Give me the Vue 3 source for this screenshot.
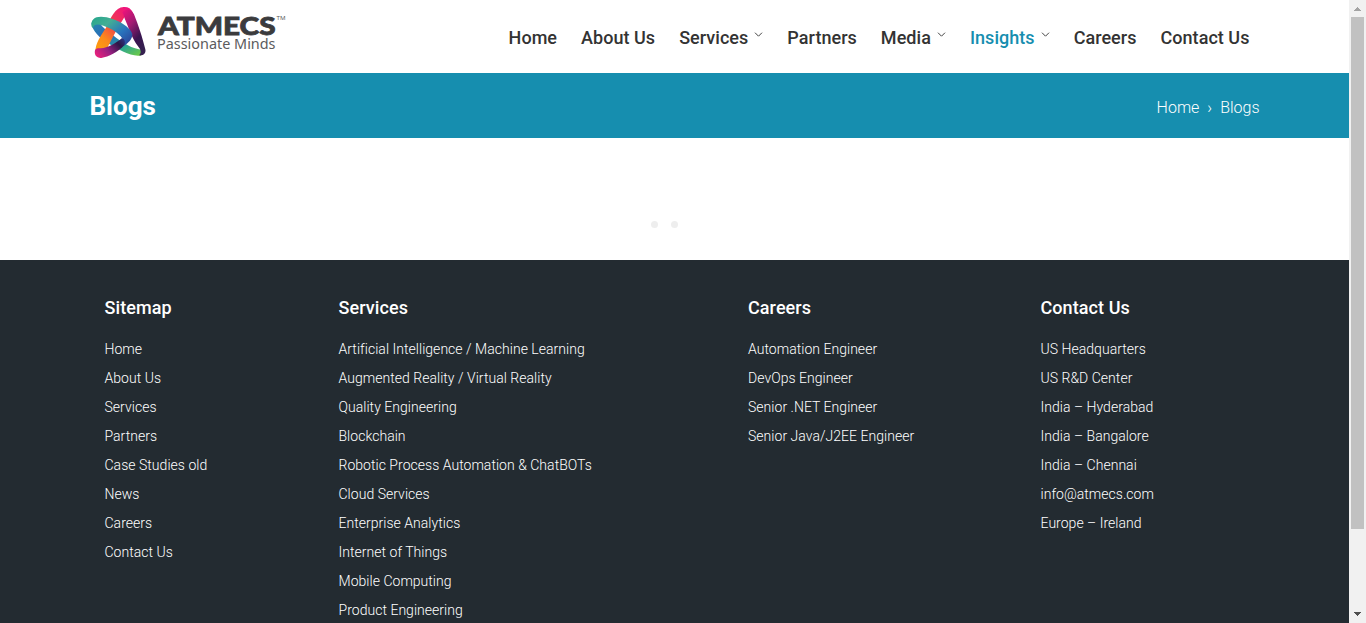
<script setup>
const nav = [
  { label: 'Home' },
  { label: 'About Us' },
  { label: 'Services', menu: true },
  { label: 'Partners' },
  { label: 'Media', menu: true },
  { label: 'Insights', menu: true, active: true },
  { label: 'Careers' },
  { label: 'Contact Us' },
]
const columns = [
  { title: 'Sitemap', links: ['Home', 'About Us', 'Services', 'Partners', 'Case Studies old', 'News', 'Careers', 'Contact Us'] },
  {
    title: 'Services',
    links: [
      'Artificial Intelligence / Machine Learning', 'Augmented Reality / Virtual Reality', 'Quality Engineering',
      'Blockchain', 'Robotic Process Automation & ChatBOTs', 'Cloud Services', 'Enterprise Analytics',
      'Internet of Things', 'Mobile Computing', 'Product Engineering',
    ],
  },
  { title: 'Careers', links: ['Automation Engineer', 'DevOps Engineer', 'Senior .NET Engineer', 'Senior Java/J2EE Engineer'] },
  { title: 'Contact Us', links: ['US Headquarters', 'US R&D Center', 'India – Hyderabad', 'India – Bangalore', 'India – Chennai', 'info@atmecs.com', 'Europe – Ireland'] },
]
</script>

<template>
  <div class="window">
    <div class="page">
      <header class="header">
        <svg class="logo" width="210" height="62" viewBox="0 0 210 62">
          <defs>
            <linearGradient id="rise" x1="0" y1="1" x2=".8" y2="0">
              <stop offset="0" stop-color="#ffa30c" /><stop offset=".3" stop-color="#fb8a1a" /><stop offset=".6" stop-color="#f0404c" /><stop offset="1" stop-color="#f0127e" />
            </linearGradient>
            <linearGradient id="fall" x1="0" y1="0" x2=".6" y2="1">
              <stop offset="0" stop-color="#f3127c" /><stop offset=".4" stop-color="#a01b72" /><stop offset=".75" stop-color="#3a1450" /><stop offset="1" stop-color="#35204f" />
            </linearGradient>
            <linearGradient id="over" x1="0" y1="0" x2="1" y2=".8">
              <stop offset="0" stop-color="#25a68c" /><stop offset=".35" stop-color="#43ae94" /><stop offset=".7" stop-color="#2974bd" /><stop offset="1" stop-color="#2b469a" />
            </linearGradient>
            <linearGradient id="under" x1="0" y1="0" x2="1" y2="1">
              <stop offset="0" stop-color="#258aad" /><stop offset=".35" stop-color="#2b68bb" /><stop offset=".65" stop-color="#25a19a" /><stop offset="1" stop-color="#76d13b" />
            </linearGradient>
            <linearGradient id="base" x1="0" y1=".8" x2="1" y2=".2">
              <stop offset="0" stop-color="#e8207c" /><stop offset=".4" stop-color="#9a2082" /><stop offset=".8" stop-color="#2b1746" /><stop offset="1" stop-color="#2b2f78" />
            </linearGradient>
          </defs>
          <g transform="scale(.33333)">
            <path fill="url(#under)" d="M34 68C36 92 58 113 88 132C116 149 145 166 174 167C187 168 193 160 188 149C158 149 126 127 99 106C80 92 67 83 60 70Z" />
            <path fill="url(#rise)" d="M46 156C46 130 62 108 78 83C93 53 105 22 131 21C143 20 153 25 159 38C149 36 142 38 135 49C117 77 99 109 80 148C65 148 52 149 46 156Z" />
            <path fill="url(#fall)" d="M127 37C140 24 154 26 162 43C174 73 188 114 196 148C199 161 189 168 177 166C186 159 182 148 174 139C155 113 145 80 133 53C132 47 130 42 127 37Z" />
            <path fill="url(#over)" d="M35 80C30 54 51 46 80 52C116 60 150 81 157 102C158 116 146 129 131 138C134 128 130 118 122 109C108 94 92 84 70 77C52 71 41 73 39 84Z" />
            <path fill="url(#base)" d="M45 151C48 145 53 144 62 145C84 144 107 130 126 114C136 119 136 128 133 136C113 157 86 171 64 174C49 175 42 164 45 151Z" />
          </g>
          <text class="brand" x="78" y="35.3" textLength="117.5" lengthAdjust="spacingAndGlyphs">ATMECS</text>
          <text class="tm" x="196.5" y="20" textLength="9" lengthAdjust="spacingAndGlyphs">TM</text>
          <text class="motto" x="77" y="49" textLength="118.5" lengthAdjust="spacingAndGlyphs">Passionate Minds</text>
        </svg>
        <nav class="nav">
          <a v-for="item in nav" :key="item.label" :class="{ active: item.active }">
            {{ item.label }}
            <svg v-if="item.menu" width="9" height="6" viewBox="0 0 9 6"><path d="M1 .7 4.5 4.2 8 .7" /></svg>
          </a>
        </nav>
      </header>
      <section class="banner">
        <h1>Blogs</h1>
        <div class="crumbs"><span>Home</span><span>›</span><span>Blogs</span></div>
      </section>
      <main class="loading"><i></i><i></i></main>
      <footer class="footer">
        <div v-for="col in columns" :key="col.title" class="col">
          <h4>{{ col.title }}</h4>
          <ul><li v-for="l in col.links" :key="l">{{ l }}</li></ul>
        </div>
      </footer>
    </div>
    <div class="scrollbar">
      <svg width="17" height="17" viewBox="0 0 17 17" shape-rendering="crispEdges"><path fill="#a3a3a3" d="M8 7h1v1h1v1h1v1h1v1H5v-1h1V9h1V8h1z" /></svg>
      <div class="thumb"></div>
      <svg class="down" width="17" height="17" viewBox="0 0 17 17" shape-rendering="crispEdges"><path fill="#505050" d="M5 6h7v1h-1v1h-1v1H9v1H8V9H7V8H6V7H5z" /></svg>
    </div>
  </div>
</template>

<style>
body { margin: 0; overflow: hidden; }
</style>
<style scoped>
.window { display: flex; width: 1366px; height: 623px; overflow: hidden; font-family: Roboto, sans-serif; background: #fff; }
.page { width: 1349px; display: flex; flex-direction: column; }
.header { height: 73px; flex: none; box-sizing: border-box; padding: 0 99.5px 0 80px; display: flex; justify-content: space-between; }
.logo { overflow: visible; }
.brand { font: 900 25px Lato, sans-serif; fill: #3b3b3d; stroke: #3b3b3d; stroke-width: .8; }
.tm { font: 6px "Open Sans", sans-serif; fill: #555; }
.motto { font: 13.5px "Noto Sans", sans-serif; fill: #5b5b5d; }
.nav { display: flex; gap: 24px; padding-top: 26px; }
.nav a { font-size: 18px; line-height: 24px; font-weight: 500; letter-spacing: .04px; color: #333; display: flex; white-space: nowrap; }
.nav a.active { color: #168eaf; }
.nav svg { margin: 6px 0 0 6px; fill: none; stroke: #444; stroke-width: 1; }
.banner { height: 65px; flex: none; box-sizing: border-box; padding: 0 89.5px; background: #168eaf; color: #fff; display: flex; justify-content: space-between; align-items: center; }
h1 { margin: 0; font-size: 26px; line-height: 34px; font-weight: 700; }
.crumbs { display: flex; gap: 8px; font-size: 16px; line-height: 24px; font-weight: 300; padding-top: 4px; }
.loading { height: 122px; flex: none; display: flex; justify-content: center; gap: 13px; padding-right: 20px; box-sizing: border-box; }
.loading i { width: 7px; height: 7px; margin-top: 82.5px; border-radius: 50%; background: #eee; }
.footer { flex: 1; min-height: 0; background: #232b31; color: #fff; display: grid; grid-template-columns: 234px 409.5px 292.5px 234px; padding: 34px 89.5px 0; overflow: hidden; }
.col { padding: 0 15px; }
h4 { margin: 0 0 14px; font-size: 18px; line-height: 27px; font-weight: 500; letter-spacing: .08px; }
ul { margin: 0; padding: 0; list-style: none; }
li { font-size: 14px; line-height: 29px; font-weight: 300; letter-spacing: .03px; white-space: nowrap; }
.scrollbar { width: 17px; background: #f1f1f1; display: flex; flex-direction: column; }
.scrollbar svg { display: block; flex: none; }
.thumb { width: 13px; height: 512px; margin-left: 2px; background: #c1c1c1; }
.down { margin-top: auto; }
</style>
